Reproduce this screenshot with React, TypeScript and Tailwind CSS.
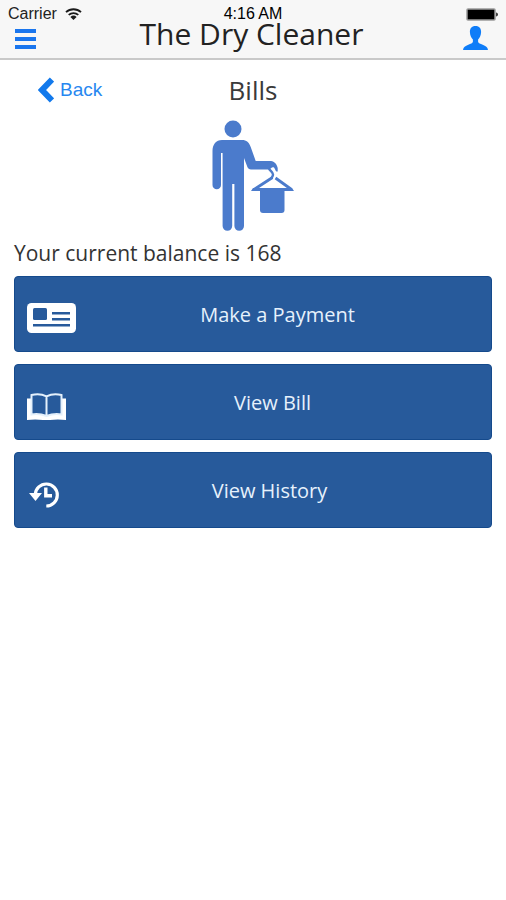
import React from 'react';

interface BillAction {
  id: string;
  label: string;
  icon: React.ReactNode;
}

function WifiIcon() {
  return (
    <svg className="w-[17px] h-3" viewBox="0 0 17 12" fill="none" stroke="#1a1a1a" aria-hidden="true">
      <path d="M1 4.2a11 11 0 0 1 15 0" strokeWidth="1.8" />
      <path d="M3.7 6.9a7.2 7.2 0 0 1 9.6 0" strokeWidth="1.8" />
      <path d="M8.5 12 5.4 8.9a4.5 4.5 0 0 1 6.2 0Z" fill="#1a1a1a" stroke="none" />
    </svg>
  );
}

function BatteryIcon() {
  return (
    <svg className="w-[33px] h-[13px]" viewBox="0 0 33 13" aria-hidden="true">
      <rect x="2" y="1" width="28" height="11" rx="1" fill="#000" stroke="#9a9a9a" strokeWidth="1.5" />
      <path d="M31 4.500c1.400.4 2 1 2 2s-.6 1.600-2 2Z" fill="#444" />
    </svg>
  );
}

function MenuIcon() {
  return (
    <svg className="w-[21px] h-[21px]" viewBox="0 0 21 21" fill="#1a76ee" aria-hidden="true">
      <path d="M0 1h21v4H0zM0 9h21v4H0zM0 17h21v4H0z" />
    </svg>
  );
}

function UserIcon() {
  return (
    <svg className="w-[25px] h-6" viewBox="0 0 25 24" fill="#0f7df8" aria-hidden="true">
      <path d="M12.500 0C8.600 0 6.800 2.600 6.900 6c.1 3.200 1.200 5.700 3 7.400v2.400c-.3 1.500-2.200 2-4.600 3C2.300 20 .4 21 0 24h25c-.4-3-2.300-4-5.300-5.200-2.400-1-4.300-1.500-4.600-3v-2.400c1.800-1.700 2.900-4.200 3-7.400.1-3.400-1.700-6-5.600-6Z" />
    </svg>
  );
}

function BackIcon() {
  return (
    <svg className="w-4 h-[26px]" viewBox="0 0 16 26" fill="none" stroke="#1279ec" strokeWidth="6" aria-hidden="true">
      <path d="M14 2.500 4 13 14 23.500" />
    </svg>
  );
}

// Man holding a hanger with a folded garment
function CleanerLogo() {
  return (
    <svg className="w-[82px] h-[111px]" viewBox="0 0 82 111" fill="#4b7bcc" role="img" aria-label="Dry cleaner">
      <circle cx="21" cy="9" r="8.500" />
      <path d="M10 20h20c4.500 0 7.200 2.500 8.700 7l5 14H59c3.500.4 6 3.400 6.700 7v3.500c-1.200.3-1.900-.4-2.300-1.600l-1.200-2.200c-1.200-.8-2.200-.4-3.200.6l-2 1.200H39c-1.800 0-3-1-3.600-2.500L32 38v68a4.700 4.700 0 0 1-9.600 0V64h-2.200v42a4.700 4.700 0 0 1-9.600 0V33H9v32a4.200 4.200 0 0 1-8.500 0V31C.5 24.500 4 20 10 20Z" />
      <path d="M57 48.500c1 2.500 4 3.500 4 6 0 1.800-1.200 2.500-1.500 4" fill="none" stroke="#4b7bcc" strokeWidth="2.400" />
      <path d="M60.500 57.500 42 69.500M63.500 58 79.500 69.500" fill="none" stroke="#4b7bcc" strokeWidth="2.800" />
      <path d="M41 68h39l2 3H39Z" />
      <path d="M48 69h24.500v21a3 3 0 0 1-3 3H51a3 3 0 0 1-3-3Z" />
    </svg>
  );
}

function CardIcon() {
  return (
    <svg className="w-[49px] h-[30px]" viewBox="0 0 49 30" aria-hidden="true">
      <rect width="49" height="30" rx="4.500" fill="#fff" />
      <g fill="#275a9b">
        <rect x="6" y="5" width="14" height="12" rx="1.500" />
        <path d="M25 9h18v2.500H25zM25 15h18v2.500H25zM6 21h37v2.500H6z" />
      </g>
    </svg>
  );
}

function BookIcon() {
  return (
    <svg className="w-[39px] h-[27px]" viewBox="0 0 39 27" aria-hidden="true">
      <path d="M0 5.500h4v16h31v-16h4V27c-5.500-.8-11-.8-16 0h-7c-5-.8-10.500-.8-16 0Z" fill="#fff" />
      <path
        d="M4.500 2c5-1.400 10.500-1 15 1.400C24 1 29.500.6 34.500 2v19.500c-5-.8-10.500-.2-15 1.500-4.500-1.700-10-2.300-15-1.500ZM19.500 3.400V23"
        fill="#275a9b"
        stroke="#e4f0fb"
        strokeWidth="2"
      />
    </svg>
  );
}

function HistoryIcon() {
  return (
    <svg className="w-[33px] h-[27px]" viewBox="-2 0 33 27" fill="none" stroke="#fff" aria-hidden="true">
      <path d="M6.300 13.500a11 11 0 1 1 11 11.500" strokeWidth="3.200" />
      <path d="M0 12h13L6.500 20Z" fill="#fff" stroke="none" />
      <path d="M16.800 6.500v8.200h6.200" strokeWidth="3.400" />
    </svg>
  );
}

const actions: BillAction[] = [
  { id: 'payment', label: 'Make a Payment', icon: <CardIcon /> },
  { id: 'bill', label: 'View Bill', icon: <BookIcon /> },
  { id: 'history', label: 'View History', icon: <HistoryIcon /> },
];

function ActionButton({ label, icon }: Omit<BillAction, 'id'>) {
  return (
    <button
      type="button"
      className="flex h-[76px] w-full items-center rounded border border-[#154a8c] bg-[#275a9b] px-3 text-xl text-[#e6f1fc] hover:bg-[#2f66ab]"
    >
      <span className="pt-2">{icon}</span>
      <span className="flex-1 pt-0.5 text-center">{label}</span>
    </button>
  );
}

export default function App() {
  return (
    <div className="min-h-screen bg-white font-['Open_Sans','Noto_Sans',sans-serif]">
      <header className="border-b-2 border-[#c9c9c9] bg-[#f7f7f7]">
        {/* Status bar */}
        <div className="grid h-6 grid-cols-3 items-center px-2 pt-0.5 font-['Liberation_Sans',Arial,sans-serif] text-base text-[#222]">
          <div className="flex items-center gap-2">
            <span>Carrier</span>
            <WifiIcon />
          </div>
          <span className="text-center text-black">4:16 AM</span>
          <div className="flex justify-end">
            <BatteryIcon />
          </div>
        </div>

        <div className="grid h-[34px] grid-cols-[1fr_auto_1fr] items-start pr-[18px] pl-[15px]">
          <button type="button" aria-label="Menu" className="justify-self-start pt-1">
            <MenuIcon />
          </button>
          <h1 className="text-[30px] leading-5 text-[#222]">The Dry Cleaner</h1>
          <button type="button" aria-label="Account" className="justify-self-end pt-0.5">
            <UserIcon />
          </button>
        </div>
      </header>

      <main className="px-3.5">
        <div className="grid h-[60px] grid-cols-3 items-center">
          <a
            href="#"
            className="flex items-center gap-1.5 pl-6 font-['Liberation_Sans',Arial,sans-serif] text-[19px] text-[#2787f0]"
          >
            <BackIcon />
            Back
          </a>
          <h2 className="text-center text-[26px] text-[#3a3a3a]">Bills</h2>
        </div>

        <div className="flex justify-center">
          <CleanerLogo />
        </div>

        <p className="py-2 text-[21px] leading-[29px] text-[#333]">Your current balance is 168</p>

        <div className="flex flex-col gap-3">
          {actions.map((action) => (
            <ActionButton key={action.id} label={action.label} icon={action.icon} />
          ))}
        </div>
      </main>
    </div>
  );
}
